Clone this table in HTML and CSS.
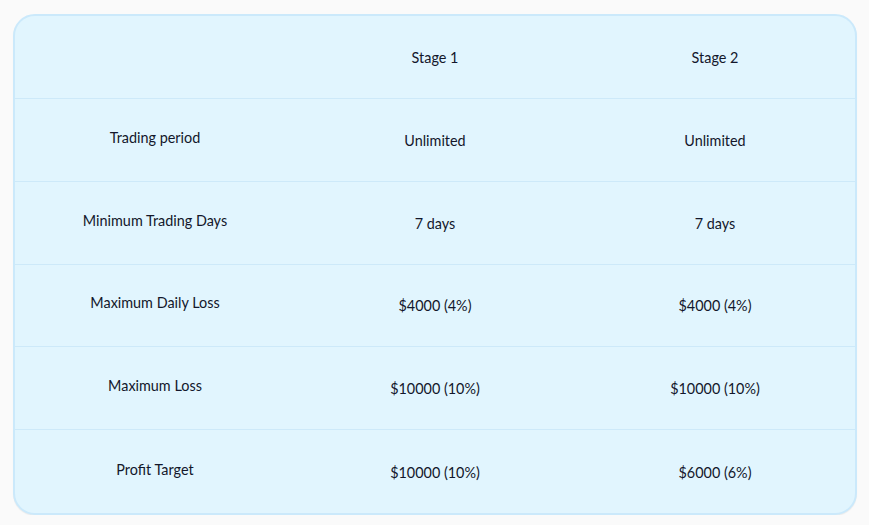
FILE: index.html
```html
<!DOCTYPE html>
<html>
<head>
<meta charset="utf-8">
<link rel="stylesheet" href="styles.css">
</head>
<body>
<div class="card">
  <div class="row">
    <div class="cell label"></div>
    <div class="cell">Stage 1</div>
    <div class="cell">Stage 2</div>
  </div>
  <div class="row">
    <div class="cell label">Trading period</div>
    <div class="cell">Unlimited</div>
    <div class="cell">Unlimited</div>
  </div>
  <div class="row">
    <div class="cell label">Minimum Trading Days</div>
    <div class="cell">7 days</div>
    <div class="cell">7 days</div>
  </div>
  <div class="row">
    <div class="cell label">Maximum Daily Loss</div>
    <div class="cell">$4000 (4%)</div>
    <div class="cell">$4000 (4%)</div>
  </div>
  <div class="row">
    <div class="cell label">Maximum Loss</div>
    <div class="cell">$10000 (10%)</div>
    <div class="cell">$10000 (10%)</div>
  </div>
  <div class="row last">
    <div class="cell label">Profit Target</div>
    <div class="cell">$10000 (10%)</div>
    <div class="cell">$6000 (6%)</div>
  </div>
</div>
</body>
</html>
```
FILE: styles.css
```css
html, body {
  margin: 0;
  padding: 0;
  background: #fafafa;
}
body {
  padding: 14px 12px 0 13px;
  font-family: Lato, "Open Sans", sans-serif;
  font-size: 14.4px;
  color: #13172b;
}
.card {
  box-sizing: border-box;
  height: 501px;
  background: #e1f5fe;
  border: 2px solid #cbe9fb;
  border-radius: 22px;
  display: grid;
  grid-template-rows: repeat(6, 1fr);
  overflow: hidden;
  box-shadow: 0 1px 1px rgba(0,0,0,0.06);
}
.row {
  display: grid;
  grid-template-columns: repeat(3, 1fr);
  border-bottom: 1px solid #cde9f9;
}
.row.last {
  border-bottom: none;
}
.cell {
  display: flex;
  align-items: center;
  justify-content: center;
  padding-top: 1px;
}
.cell.label {
  padding-top: 0;
  padding-bottom: 5px;
}
```
